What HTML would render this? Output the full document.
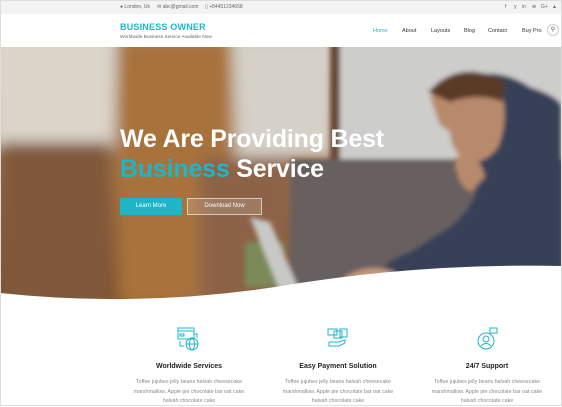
<!DOCTYPE html>
<html><head><meta charset="utf-8"><style>
*{margin:0;padding:0;box-sizing:border-box}
body{width:562px;height:406px;overflow:hidden;background:#fff;font-family:"Liberation Sans",sans-serif;position:relative}
.top{position:absolute;left:0;top:0;width:562px;height:14px;background:#f3f3f3;font-size:5px;color:#666}
.top span{position:absolute;top:4px;white-space:nowrap}
.hdr{position:absolute;left:0;top:14px;width:562px;height:33px;background:#fff}
.logo{position:absolute;left:120px;top:8px;font-size:9px;font-weight:bold;color:#1fb5c9;letter-spacing:.2px}
.tag{position:absolute;left:120px;top:21px;font-size:4.8px;color:#666}
.nav span{position:absolute;top:14px;font-size:5.5px;color:#333}
.hero{position:absolute;left:0;top:47px;width:562px;height:256px;overflow:hidden}
h1{position:absolute;left:120px;font-size:25px;line-height:30px;color:#fff;font-weight:bold;letter-spacing:-.2px;white-space:nowrap}
h1 b{color:#1fb5c9}
.btn{position:absolute;height:17px;font-size:6px;color:#fff;text-align:center;line-height:17px}
.f{position:absolute;top:320px;width:150px;text-align:center}
.f h3{position:absolute;top:43px;width:150px;font-size:7px;color:#222}
.f p{position:absolute;top:58px;left:17px;width:116px;font-size:5.3px;line-height:9.5px;color:#888}
.f svg{position:absolute;left:63px;top:6px}
</style></head><body>
<div class="top">
<span style="left:120px">● London, Uk</span>
<span style="left:157px">✉ abc@gmail.com</span>
<span style="left:205px">▯ +84451234658</span>
<span style="left:505px">f</span><span style="left:514px">y</span><span style="left:522px">in</span><span style="left:532px">⊕</span><span style="left:541px">G+</span><span style="left:552px">▲</span>
</div>
<div class="hdr">
<div class="logo">BUSINESS OWNER</div>
<div class="tag">Worldwide Business Service Available Now</div>
<div class="nav">
<span style="left:373px;color:#1fb5c9">Home</span>
<span style="left:402px">About</span>
<span style="left:431px">Layouts</span>
<span style="left:464px">Blog</span>
<span style="left:488px">Contact</span>
<span style="left:522px">Buy Pro</span>
</div>
<div style="position:absolute;left:547px;top:10px;width:12px;height:12px;border:1px solid #ccc;border-radius:50%;font-size:6px;text-align:center;line-height:10px;color:#555">⚲</div>
</div>
<div class="hero">
<svg width="562" height="256" viewBox="0 0 562 256">
<defs><filter id="b"><feGaussianBlur stdDeviation="7"/></filter><filter id="s"><feGaussianBlur stdDeviation="2.5"/></filter>
<linearGradient id="g1" x1="0" y1="0" x2="0" y2="1"><stop offset="0" stop-color="#c9b79e"/><stop offset=".45" stop-color="#a07248"/><stop offset="1" stop-color="#7a4c28"/></linearGradient></defs>
<rect width="562" height="256" fill="url(#g1)"/>
<g filter="url(#b)">
<rect x="-10" y="-10" width="125" height="110" fill="#dcd5ca"/>
<rect x="0" y="95" width="110" height="170" fill="#80583a"/>
<rect x="118" y="-10" width="112" height="270" fill="#a8723e"/>
<rect x="235" y="-10" width="100" height="120" fill="#d5d0c8"/>
<rect x="200" y="110" width="90" height="150" fill="#8c6446"/>
</g>
<g filter="url(#s)">
<rect x="335" y="-5" width="235" height="130" fill="#cdcdcb"/>
<rect x="330" y="-5" width="10" height="125" fill="#6a4838"/>
<rect x="290" y="112" width="280" height="145" fill="#68615f"/>
<path d="M470 30 Q500 20 530 40 Q560 50 562 60 L562 230 L370 240 Q380 215 410 205 L450 180 Q475 160 480 130 Q470 100 470 60 Z" fill="#394159"/>
<path d="M430 50 Q460 20 500 40 Q510 70 498 100 Q485 118 465 115 Q450 100 450 85 L440 78 Z" fill="#b88a6c"/>
<path d="M428 45 Q460 10 505 35 L502 55 Q480 45 450 55 Z" fill="#5a3a26"/>
<path d="M455 110 Q480 105 485 130 L470 145 Q455 135 455 110Z" fill="#b88a6c"/>
<path d="M345 230 Q370 215 395 225 L385 245 L345 248 Z" fill="#c49a80"/>
<rect x="245" y="195" width="40" height="45" rx="3" fill="#7c8a58"/>
<path d="M250 170 L270 175 L300 245 L280 245 Z" fill="#c8c8c6"/>
</g>
<path d="M0 246 Q150 262 300 236 Q430 216 562 219 L562 256 L0 256Z" fill="#fff"/>
</svg>
<h1 style="top:77px">We Are Providing Best<br><b>Business</b> Service</h1>
<div class="btn" style="top:151px;left:120px;width:62px;background:#1fb5c9">Learn More</div>
<div class="btn" style="top:151px;left:187px;width:75px;border:1px solid rgba(255,255,255,.6);background:rgba(255,255,255,.15);line-height:15px">Download Now</div>
</div>
<div class="f" style="left:114px">
<svg width="24" height="26" viewBox="0 0 24 26" fill="none" stroke="#1fb5c9" stroke-width="1"><rect x="1" y="2" width="16" height="11"/><line x1="1" y1="5" x2="17" y2="5"/><rect x="3" y="8" width="4" height="2"/><path d="M17 8h3v4"/><path d="M3 15v5h4"/><circle cx="15" cy="18" r="6"/><ellipse cx="15" cy="18" rx="2.5" ry="6"/><line x1="9" y1="18" x2="21" y2="18"/></svg>
<h3>Worldwide Services</h3>
<p>Toffee jujubes jelly beans halvah cheesecake marshmallow. Apple pie chocolate bar oat cake halvah chocolate cake</p>
</div>
<div class="f" style="left:263px">
<svg width="24" height="26" viewBox="0 0 24 26" fill="none" stroke="#1fb5c9" stroke-width="1"><rect x="2" y="3" width="9" height="6"/><rect x="8" y="5" width="8" height="7"/><rect x="14" y="3" width="7" height="8"/><path d="M3 16h10l6-2v3l-6 3H3z"/></svg>
<h3>Easy Payment Solution</h3>
<p>Toffee jujubes jelly beans halvah cheesecake marshmallow. Apple pie chocolate bar oat cake halvah chocolate cake</p>
</div>
<div class="f" style="left:412px">
<svg width="24" height="26" viewBox="0 0 24 26" fill="none" stroke="#1fb5c9" stroke-width="1"><circle cx="11" cy="15" r="8"/><circle cx="11" cy="13" r="3"/><path d="M6 20q5-5 10 0"/><rect x="15" y="2" width="7" height="5"/></svg>
<h3>24/7 Support</h3>
<p>Toffee jujubes jelly beans halvah cheesecake marshmallow. Apple pie chocolate bar oat cake halvah chocolate cake</p>
</div>
<div style="position:absolute;left:0;top:0;width:562px;height:406px;border:1px solid #ddd;pointer-events:none"></div>
</body></html>
